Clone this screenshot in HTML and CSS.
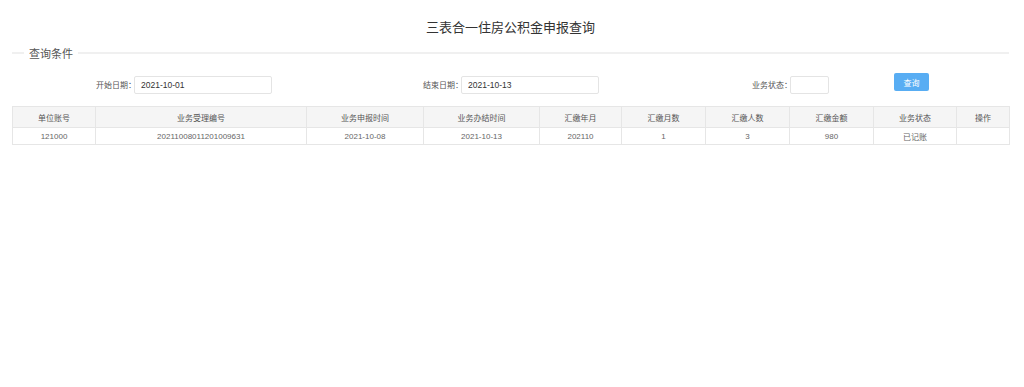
FILE: index.html
```html
<!DOCTYPE html>
<html lang="zh-CN">
<head>
    <meta charset="UTF-8">
    <title>三表合一住房公积金申报查询</title>
    <link rel="stylesheet" href="styles.css">
</head>
<body>
    <div class="page">
        <h1 class="title">三表合一住房公积金申报查询</h1>

        <div class="legend"><span>查询条件</span></div>

        <div class="search-row">
            <div class="field field-start">
                <label>开始日期：</label>
                <input type="text" class="box box-date" value="2021-10-01">
            </div>
            <div class="field field-end">
                <label>结束日期：</label>
                <input type="text" class="box box-date" value="2021-10-13">
            </div>
            <div class="field field-status">
                <label>业务状态：</label>
                <input type="text" class="box box-status" value="">
            </div>
            <button class="btn-search">查询</button>
        </div>

        <table class="result-table">
            <colgroup>
                <col style="width: 83px">
                <col style="width: 211px">
                <col style="width: 117px">
                <col style="width: 116px">
                <col style="width: 82px">
                <col style="width: 84px">
                <col style="width: 84px">
                <col style="width: 84px">
                <col style="width: 83px">
                <col style="width: 53px">
            </colgroup>
            <thead>
                <tr>
                    <th>单位账号</th>
                    <th>业务受理编号</th>
                    <th>业务申报时间</th>
                    <th>业务办结时间</th>
                    <th>汇缴年月</th>
                    <th>汇缴月数</th>
                    <th>汇缴人数</th>
                    <th>汇缴金额</th>
                    <th>业务状态</th>
                    <th>操作</th>
                </tr>
            </thead>
            <tbody>
                <tr>
                    <td>121000</td>
                    <td>20211008011201009631</td>
                    <td>2021-10-08</td>
                    <td>2021-10-13</td>
                    <td>202110</td>
                    <td>1</td>
                    <td>3</td>
                    <td>980</td>
                    <td>已记账</td>
                    <td></td>
                </tr>
            </tbody>
        </table>
    </div>
</body>
</html>
```

FILE: styles.css
```css
* {
    margin: 0;
    padding: 0;
    box-sizing: border-box;
}

body {
    background: #fff;
    font-family: "Noto Sans CJK SC", "Noto Sans", sans-serif;
    color: #555;
}

.page {
    padding: 0 15px 0 12px;
}

.title {
    padding-top: 18px;
    font-size: 13px;
    font-weight: normal;
    line-height: 18px;
    color: #333;
    text-align: center;
}

.legend {
    display: flex;
    align-items: center;
    margin-top: 9px;
    height: 16px;
}

.legend::before,
.legend::after {
    content: '';
    height: 2px;
    background: #f0f0f0;
}

.legend::before {
    width: 12px;
}

.legend::after {
    flex: 1;
}

.legend span {
    padding: 0 5px;
    font-size: 11px;
    line-height: 16px;
    color: #555;
}

.search-row {
    display: flex;
    align-items: center;
    margin-top: 14px;
    height: 19px;
}

.field {
    display: flex;
    align-items: center;
}

.field label {
    flex: none;
    width: 38px;
    font-size: 8px;
    color: #555;
    white-space: nowrap;
}

.field-start {
    margin-left: 84px;
}

.field-end {
    margin-left: 151px;
}

.field-status {
    margin-left: 153px;
}

.box {
    position: relative;
    height: 18px;
    border: 1px solid #e4e4e4;
    border-radius: 2px;
    padding: 0 6px;
    background: transparent;
    font-family: "Liberation Sans", sans-serif;
    font-size: 8.5px;
    color: #333;
    outline: none;
}

.box-date {
    width: 138px;
}

.box-status {
    width: 39px;
}

.btn-search {
    margin-left: 65px;
    margin-top: -5px;
    width: 35px;
    height: 18px;
    border: none;
    border-radius: 2px;
    background: #58adf3;
    color: #fff;
    font-family: "Noto Sans CJK SC", sans-serif;
    font-size: 8px;
}

.result-table {
    margin-top: 12px;
    width: 997px;
    border-collapse: collapse;
    table-layout: fixed;
    font-size: 8px;
}

.result-table th,
.result-table td {
    border: 1px solid #e6e6e6;
    text-align: center;
    font-weight: normal;
}

.result-table th {
    height: 21px;
    background: #f5f5f5;
    color: #555;
}

.result-table td {
    height: 17px;
    color: #666;
    font-family: "Liberation Sans", "Noto Sans CJK SC", sans-serif;
}
```
